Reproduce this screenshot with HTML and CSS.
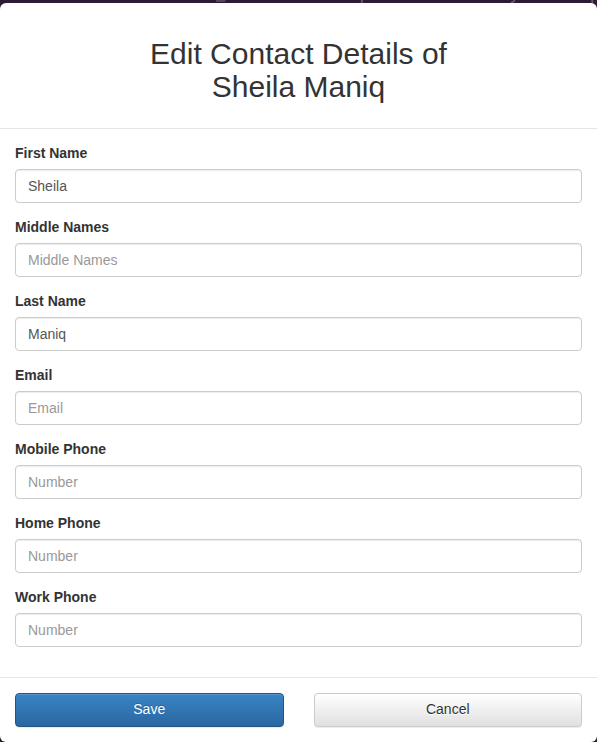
FILE: index.html
```html
<!DOCTYPE html>
<html lang="en">
<head>
<meta charset="utf-8">
<title>Edit Contact Details</title>
<link rel="stylesheet" href="styles.css">
</head>
<body>
<div class="navbar">
  <div class="nav-inner">
    <span class="nav-icon">&#9638;</span>
    <span class="nav-item">Home</span>
    <span class="nav-item">Report</span>
    <span class="nav-item nav-wide">Form Library</span>
    <span class="nav-item">Help</span>
  </div>
</div>
<div class="modal">
  <div class="modal-header">
    <h2 class="modal-title">Edit Contact Details of<br>Sheila Maniq</h2>
  </div>
  <form class="modal-body">
    <div class="form-group">
      <label for="fn">First Name</label>
      <input id="fn" class="form-control" type="text" value="Sheila" placeholder="First Name">
    </div>
    <div class="form-group">
      <label for="mn">Middle Names</label>
      <input id="mn" class="form-control" type="text" placeholder="Middle Names">
    </div>
    <div class="form-group">
      <label for="ln">Last Name</label>
      <input id="ln" class="form-control" type="text" value="Maniq" placeholder="Last Name">
    </div>
    <div class="form-group">
      <label for="em">Email</label>
      <input id="em" class="form-control" type="text" placeholder="Email">
    </div>
    <div class="form-group">
      <label for="mp">Mobile Phone</label>
      <input id="mp" class="form-control" type="text" placeholder="Number">
    </div>
    <div class="form-group">
      <label for="hp">Home Phone</label>
      <input id="hp" class="form-control" type="text" placeholder="Number">
    </div>
    <div class="form-group">
      <label for="wp">Work Phone</label>
      <input id="wp" class="form-control" type="text" placeholder="Number">
    </div>
  </form>
  <div class="modal-footer">
    <div class="col"><button class="btn btn-primary" type="button">Save</button></div>
    <div class="col"><button class="btn btn-default" type="button">Cancel</button></div>
  </div>
</div>
</body>
</html>
```

FILE: styles.css
```css
* { box-sizing: border-box; }
html, body {
  margin: 0;
  padding: 0;
}
body {
  background: #2e1a35;
  font-family: "Liberation Sans", Arial, Helvetica, sans-serif;
  font-size: 14px;
  line-height: 1.42857;
  color: #333;
  width: 597px;
  height: 742px;
  overflow: hidden;
}
.navbar {
  height: 3px;
  overflow: hidden;
  position: relative;
}
.nav-inner {
  display: flex;
  align-items: baseline;
  margin-top: -14px;
  padding-left: 215px;
  color: #6f6478;
  font-size: 17px;
  line-height: 17px;
  white-space: nowrap;
}
.nav-icon { font-size: 12px; margin-right: 34px; }
.nav-item { margin-right: 33px; }
.nav-wide { margin-right: 46px; }
.modal {
  background: #fff;
  border-radius: 6px;
  height: 739px;
  display: flex;
  flex-direction: column;
}
.modal-header {
  padding: 34px 15px 25px;
  border-bottom: 1px solid #e5e5e5;
  text-align: center;
}
.modal-title {
  margin: 0;
  font-size: 30px;
  font-weight: 400;
  line-height: 33px;
  color: #333;
}
.modal-body {
  padding: 15px 15px 0;
  margin: 0;
  flex: 1;
}
.form-group {
  margin-bottom: 15px;
}
.form-group label {
  display: block;
  font-weight: 700;
  margin-bottom: 5px;
  max-width: 100%;
}
.form-control {
  display: block;
  width: 100%;
  height: 34px;
  padding: 6px 12px;
  font-family: inherit;
  font-size: 14px;
  line-height: 1.42857;
  color: #555;
  background: #fff;
  border: 1px solid #ccc;
  border-radius: 4px;
  box-shadow: inset 0 1px 1px rgba(0,0,0,.075);
  outline: none;
}
.form-control::placeholder { color: #999; opacity: 1; }
.modal-footer {
  border-top: 1px solid #e5e5e5;
  padding: 15px 0;
  display: flex;
}
.col {
  flex: 1;
  padding: 0 15px;
}
.btn {
  display: block;
  width: 100%;
  height: 34px;
  padding: 6px 12px;
  font-family: inherit;
  font-size: 14px;
  line-height: 1.42857;
  border-radius: 4px;
  border: 1px solid transparent;
  cursor: pointer;
}
.btn-primary {
  color: #fff;
  background-image: linear-gradient(to bottom, #3a84c5 0, #2a67a1 100%);
  border-color: #245580;
  text-shadow: 0 -1px 0 rgba(0,0,0,.2);
  box-shadow: inset 0 1px 0 rgba(255,255,255,.15), 0 1px 1px rgba(0,0,0,.075);
}
.btn-default {
  color: #333;
  background-image: linear-gradient(to bottom, #fff 0, #e0e0e0 100%);
  border-color: #ccc;
  text-shadow: 0 1px 0 #fff;
  box-shadow: inset 0 1px 0 rgba(255,255,255,.15), 0 1px 1px rgba(0,0,0,.075);
}
```
